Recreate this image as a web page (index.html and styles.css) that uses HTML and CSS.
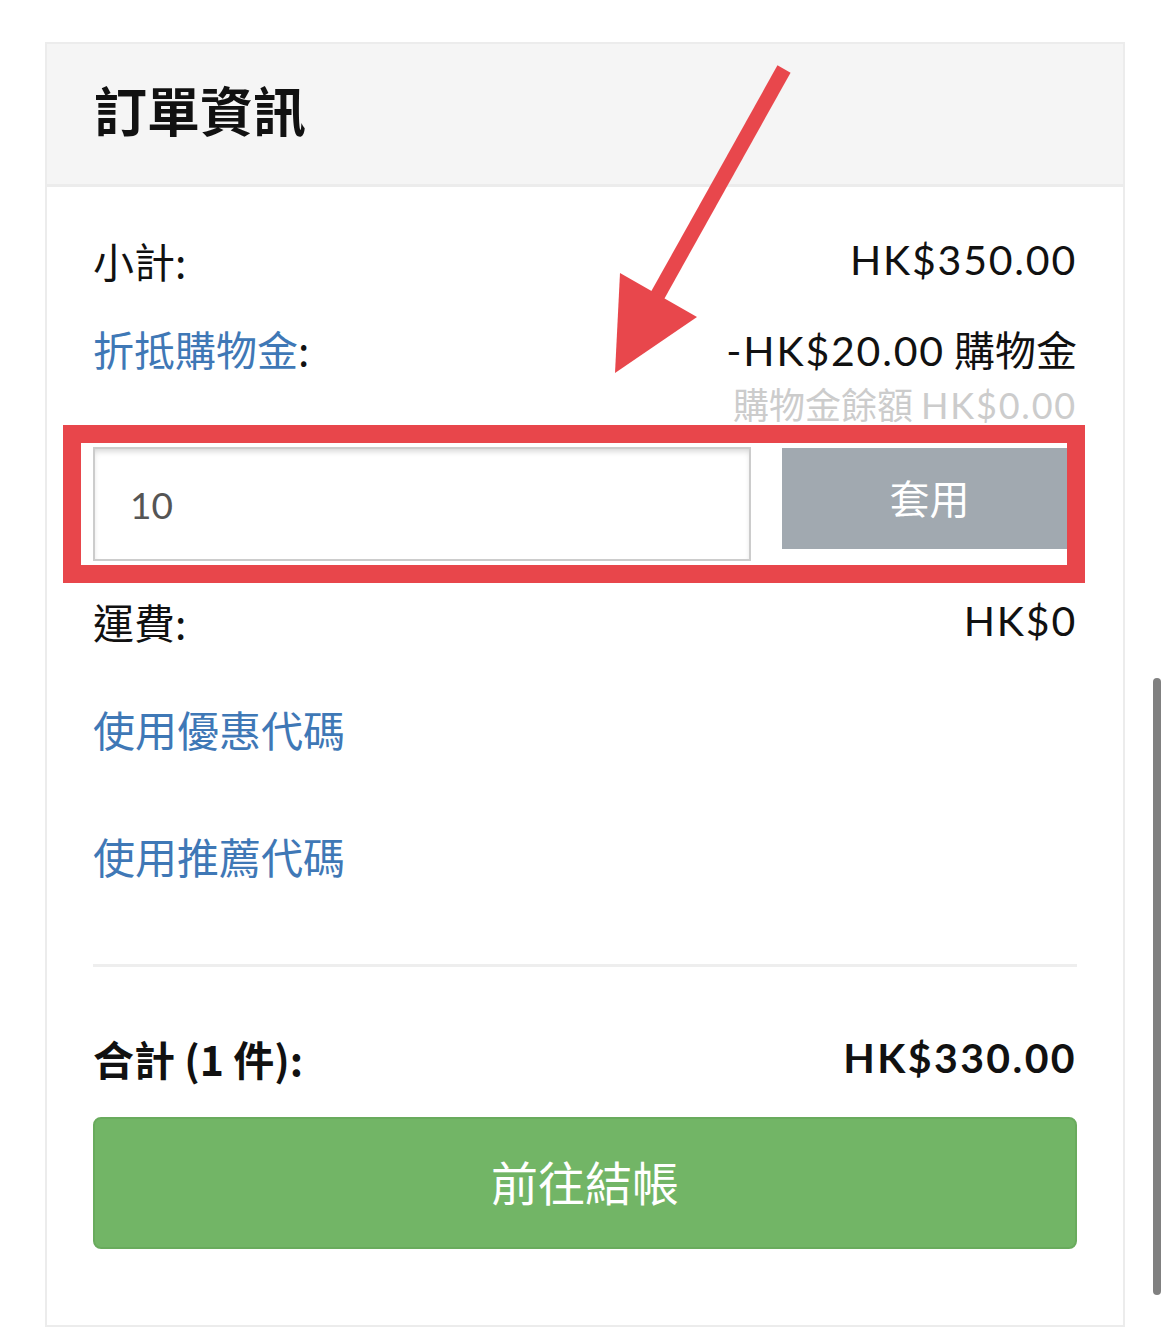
FILE: index.html
```html
<!DOCTYPE html>
<html lang="zh-Hant">
<head>
<meta charset="utf-8">
<title>訂單資訊</title>
<link rel="stylesheet" href="styles.css">
</head>
<body>
<div class="card">
  <div class="card-header">
    <h2 class="card-title">訂單資訊</h2>
  </div>
  <div class="card-body">
    <div class="row row-subtotal">
      <span class="label">小計:</span>
      <span class="value num">HK$350.00</span>
    </div>
    <div class="row row-credit">
      <span class="label"><span class="link">折抵購物金</span>:</span>
      <div class="credit-values">
        <span class="value"><span class="num">-HK$20.00</span> 購物金</span>
        <span class="balance">購物金餘額 <span class="num">HK$0.00</span></span>
      </div>
    </div>
    <div class="promo">
      <input class="promo-input" type="text" value="10">
      <button class="promo-btn" type="button">套用</button>
      <div class="highlight-box"></div>
    </div>
    <div class="row row-shipping">
      <span class="label">運費:</span>
      <span class="value num">HK$0</span>
    </div>
    <a class="link link-block link-coupon" href="#">使用優惠代碼</a>
    <a class="link link-block link-referral" href="#">使用推薦代碼</a>
    <hr class="divider">
    <div class="row row-total">
      <span class="label">合計 (1 件):</span>
      <span class="value num">HK$330.00</span>
    </div>
    <button class="checkout-btn" type="button">前往結帳</button>
  </div>
</div>
<svg class="arrow" width="1170" height="420" viewBox="0 0 1170 420" aria-hidden="true">
  <line x1="784" y1="69" x2="655" y2="300" stroke="#e8474c" stroke-width="15"/>
  <polygon points="615,373 620,273 697,317" fill="#e8474c"/>
</svg>
<div class="scrollbar"></div>
</body>
</html>
```

FILE: styles.css
```css
html, body {
  margin: 0;
  padding: 0;
  background: #ffffff;
}

body {
  font-family: "Noto Sans CJK TC", "Noto Sans CJK SC", sans-serif;
  color: #111111;
  position: relative;
  min-height: 1331px;
}

.num {
  font-family: "Lato", "Open Sans", sans-serif;
  letter-spacing: 1.8px;
}

.card {
  margin: 42px 0 0 45px;
  width: 1080px;
  box-sizing: border-box;
  border: 2px solid #ececec;
  background: #ffffff;
}

.card-header {
  height: 143px;
  box-sizing: border-box;
  padding: 0 0 10px 47px;
  background: #f5f5f5;
  border-bottom: 3px solid #ececec;
  display: flex;
  align-items: center;
}

.card-title {
  margin: 0;
  font-size: 53px;
  font-weight: 700;
  line-height: 1;
  color: #111111;
}

.card-body {
  padding: 45px 46px 76px 46px;
}

.row {
  display: flex;
  justify-content: space-between;
  align-items: flex-start;
  font-size: 41px;
  line-height: 56px;
}

.value {
  font-size: 41px;
}

.link {
  color: #3f78b6;
  text-decoration: none;
}

.row-credit {
  margin-top: 32px;
}

.credit-values {
  display: flex;
  flex-direction: column;
  align-items: flex-end;
}

.balance {
  color: #cccccc;
  font-size: 36px;
  line-height: 48px;
}

.promo {
  position: relative;
  display: flex;
  align-items: flex-start;
  gap: 31px;
  margin-top: 18px;
}

.promo-input {
  width: 658px;
  height: 114px;
  box-sizing: border-box;
  border: 2px solid #cccccc;
  box-shadow: inset 0 4px 6px -2px rgba(0, 0, 0, 0.18);
  padding: 0 0 0 35px;
  font-family: "Lato", "Open Sans", sans-serif;
  font-size: 37px;
  color: #555555;
  background: #ffffff;
  outline: none;
}

.promo-btn {
  flex: 1;
  height: 101px;
  margin-top: 1px;
  border: none;
  background: #a1a9b0;
  color: #ffffff;
  font-family: "Noto Sans CJK TC", sans-serif;
  font-size: 40px;
  padding: 0 0 4px 0;
}

.highlight-box {
  position: absolute;
  left: -30px;
  top: -22px;
  width: 1022px;
  height: 158px;
  box-sizing: border-box;
  border: 18px solid #e8464b;
  pointer-events: none;
}

.row-shipping {
  margin-top: 32px;
}

.link-block {
  display: block;
  font-size: 42px;
  line-height: 56px;
}

.link-coupon {
  margin-top: 52px;
}

.link-referral {
  margin-top: 71px;
}

.divider {
  margin: 80px 0 0 0;
  border: none;
  height: 3px;
  background: #eeeeee;
}

.row-total {
  margin-top: 63px;
  font-weight: 700;
}

.row-total .num {
  font-weight: 700;
  letter-spacing: 2.4px;
}

.checkout-btn {
  display: block;
  width: 100%;
  height: 132px;
  margin-top: 31px;
  border: 2px solid #69ab5d;
  border-radius: 8px;
  background: #72b566;
  color: #ffffff;
  font-family: "Noto Sans CJK TC", sans-serif;
  font-size: 47px;
  padding: 0 0 6px 0;
}

.arrow {
  position: absolute;
  left: 0;
  top: 0;
  pointer-events: none;
}

.scrollbar {
  position: absolute;
  left: 1153px;
  top: 678px;
  width: 8px;
  height: 617px;
  border-radius: 4px;
  background: #808080;
}
```
